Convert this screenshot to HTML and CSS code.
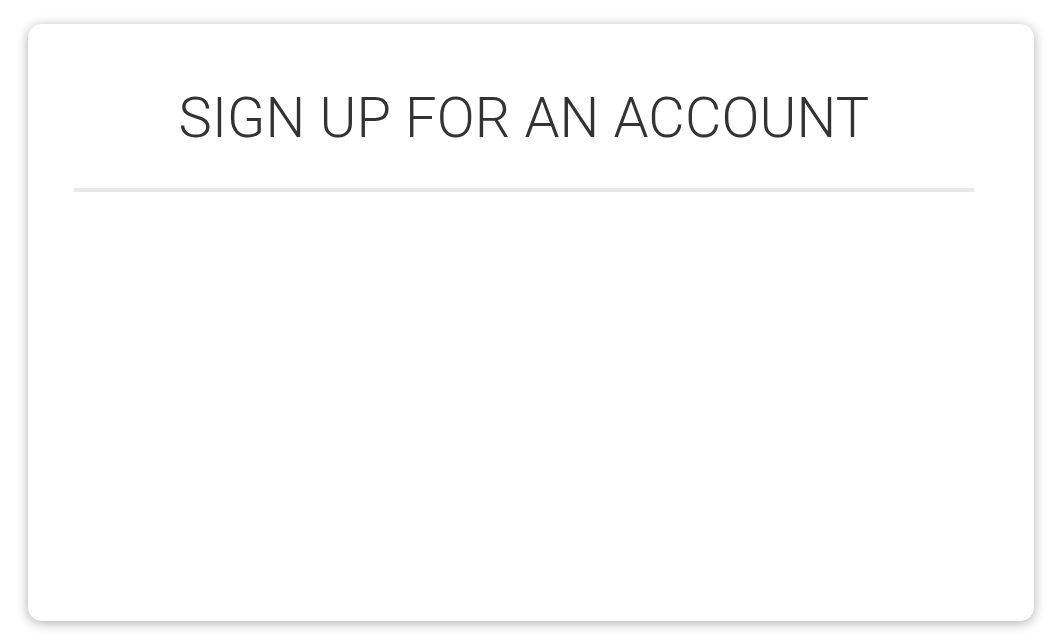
FILE: index.html
```html
<!DOCTYPE html>
<html lang="en">
<head>
  <meta charset="UTF-8" />
  <meta name="viewport" content="width=device-width, initial-scale=1.0"/>
  <title>Sign Up</title>
  <link rel="stylesheet" href="styles.css">
</head>
<body>

  <!-- Sign up card -->
  <div class="card">
    <h1 class="title">SIGN UP FOR AN ACCOUNT</h1>
    <hr class="divider">
  </div>

</body>
</html>
```

FILE: styles.css
```css
* {
  box-sizing: border-box;
  margin: 0;
  padding: 0;
}

body {
  font-family: Roboto, "Liberation Sans", Arial, sans-serif;
  background: #fff;
  color: #333;
  padding: 24px 23px 21px 28px;
}

.card {
  height: 597px;
  background: #fff;
  border-radius: 14px;
  box-shadow: 0 2px 12px rgba(0, 0, 0, 0.32);
  padding: 66px 60px 0 46px;
}

.title {
  font-size: 56px;
  font-weight: 300;
  line-height: 56px;
  letter-spacing: 0.2px;
  text-align: center;
  color: #333;
}

.divider {
  border: none;
  height: 4px;
  background: #e8e8e8;
  margin-top: 42px;
}
```
